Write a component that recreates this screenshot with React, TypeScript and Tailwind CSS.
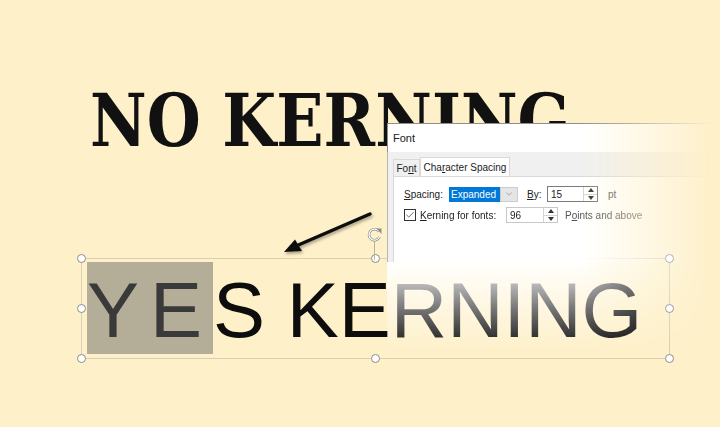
import { Check, ChevronDown } from "lucide-react";

const Spinner = () => (
  <div className="flex flex-col w-[14px] h-full border-l border-[#d4d4d4]">
    <div className="flex-1 flex items-center justify-center border-b border-[#d4d4d4]">
      <div className="w-0 h-0 border-l-[3px] border-r-[3px] border-b-[4px] border-l-transparent border-r-transparent border-b-[#333]" />
    </div>
    <div className="flex-1 flex items-center justify-center">
      <div className="w-0 h-0 border-l-[3px] border-r-[3px] border-t-[4px] border-l-transparent border-r-transparent border-t-[#333]" />
    </div>
  </div>
);

const Handle = ({ className }: { className: string }) => (
  <div
    className={`absolute w-[9px] h-[9px] rounded-full bg-white border border-[#8c8c8c] ${className}`}
  />
);

const FontDialog = () => {
  return (
    <div className="absolute left-[387px] top-[123px] w-[333px] h-[230px] flex flex-col [mask-image:linear-gradient(to_right,black_58%,transparent_98%)] font-['Liberation_Sans',Arial,sans-serif] text-[10px] text-[#222]">
      <div className="h-[29px] shrink-0 bg-white border-t border-l border-[#8f8f8f] flex items-center pl-[5px] text-[11px]">
        Font
      </div>
      <div className="h-[110px] shrink-0 bg-[#f0f0f0] border-l border-[#b8b8b8] pt-[6px] pl-[5px] flex flex-col">
        <div className="flex items-end h-[18px]">
          <div className="h-[17px] w-[27px] border border-b-0 border-[#d9d9d9] flex items-center justify-center">
            Fo<span className="underline">n</span>t
          </div>
          <div className="h-[19px] w-[90px] bg-white border border-b-0 border-[#d9d9d9] flex items-center justify-center">
            Cha<span className="underline">r</span>acter Spacing
          </div>
        </div>
        <div className="flex-1 bg-white border-t border-l border-[#d9d9d9] pl-[10px] pt-[9px] flex flex-col gap-[5px]">
          <div className="flex items-center h-[16px]">
            <span className="w-[45px]">
              <span className="underline">S</span>pacing:
            </span>
            <div className="flex h-[15px] w-[69px]">
              <div className="w-[51px] bg-[#0078d7] text-white flex items-center pl-[2px]">
                Expanded
              </div>
              <div className="flex-1 bg-[#e5e5e5] border border-[#cccccc] flex items-center justify-center">
                <ChevronDown size={10} strokeWidth={1.2} color="#666" />
              </div>
            </div>
            <span className="w-[20px] ml-[9px]">
              <span className="underline">B</span>y:
            </span>
            <div className="flex h-[16px] w-[51px] border border-[#7a7a7a] bg-white">
              <div className="flex-1 flex items-center pl-[3px]">15</div>
              <Spinner />
            </div>
            <span className="ml-[10px] text-[#555]">pt</span>
          </div>
          <div className="flex items-center h-[16px]">
            <div className="w-[12px] h-[12px] border border-[#333] bg-white flex items-center justify-center">
              <Check size={10} strokeWidth={1.6} color="#222" />
            </div>
            <span className="ml-[4px] w-[86px]">
              <span className="underline">K</span>erning for fonts:
            </span>
            <div className="flex h-[16px] w-[52px] border border-[#c8c8c8] bg-white">
              <div className="flex-1 flex items-center pl-[3px]">96</div>
              <Spinner />
            </div>
            <span className="ml-[7px] text-[#555]">
              P<span className="underline">o</span>ints and above
            </span>
          </div>
        </div>
      </div>
      <div className="flex-1 bg-gradient-to-b from-white/95 via-white/45 to-transparent" />
    </div>
  );
};

const Arrow = () => (
  <svg
    className="absolute left-[270px] top-[200px] overflow-visible"
    width="120"
    height="60"
    viewBox="270 200 120 60"
  >
    <defs>
      <filter id="sh" x="-20%" y="-50%" width="140%" height="200%">
        <feDropShadow dx="1" dy="2" stdDeviation="1.5" floodColor="#000" floodOpacity="0.35" />
      </filter>
    </defs>
    <g filter="url(#sh)">
      <line x1="370" y1="214" x2="296" y2="246" stroke="#111" strokeWidth="3.5" strokeLinecap="round" />
      <polygon points="284,252 295,239.5 302,251" fill="#111" />
    </g>
  </svg>
);

const RotateHandle = () => (
  <svg className="absolute left-[366px] top-[226px]" width="18" height="34" viewBox="0 0 18 34">
    <line x1="8.5" y1="14" x2="8.5" y2="34" stroke="#b9b2a0" strokeWidth="1" />
    <path d="M13 5.5 A5.5 5.5 0 1 0 13.5 11" fill="none" stroke="#8c8c8c" strokeWidth="2.6" />
    <path d="M13 5.5 A5.5 5.5 0 1 0 13.5 11" fill="none" stroke="#fff" strokeWidth="1.2" />
    <polygon points="10.5,2.5 15.5,2.5 15.5,8" fill="#8c8c8c" />
  </svg>
);

export default function App() {
  return (
    <div className="relative w-[720px] h-[427px] overflow-hidden bg-[#fef0c9] flex flex-col">
      <div className="pl-[90px] pt-[84px] h-[167px] shrink-0">
        <span className="inline-block origin-left scale-x-[0.85] font-['DejaVu_Serif',serif] font-bold text-[73px] leading-none text-[#111] whitespace-nowrap">
          NO KERNING
        </span>
      </div>

      <div className="relative ml-[81px] mt-[91px] w-[589px] h-[101px] border border-[#d9cfb2] pl-[5px] pt-[12px]">
        <div className="font-['Liberation_Sans',Arial,sans-serif] text-[78px] leading-none whitespace-nowrap text-[#0d0d0d]">
          <span className="bg-[#b4ae99] text-[#3a3a3a] tracking-[11px] pt-[4px]">YE</span>
          S KERNING
        </div>
        <Handle className="left-[-5px] top-[-5px]" />
        <Handle className="left-[289px] top-[-5px]" />
        <Handle className="right-[-5px] top-[-5px]" />
        <Handle className="left-[-5px] top-[45px]" />
        <Handle className="right-[-5px] top-[45px]" />
        <Handle className="left-[-5px] bottom-[-5px]" />
        <Handle className="left-[289px] bottom-[-5px]" />
        <Handle className="right-[-5px] bottom-[-5px]" />
      </div>

      <RotateHandle />
      <Arrow />
      <FontDialog />
    </div>
  );
}
